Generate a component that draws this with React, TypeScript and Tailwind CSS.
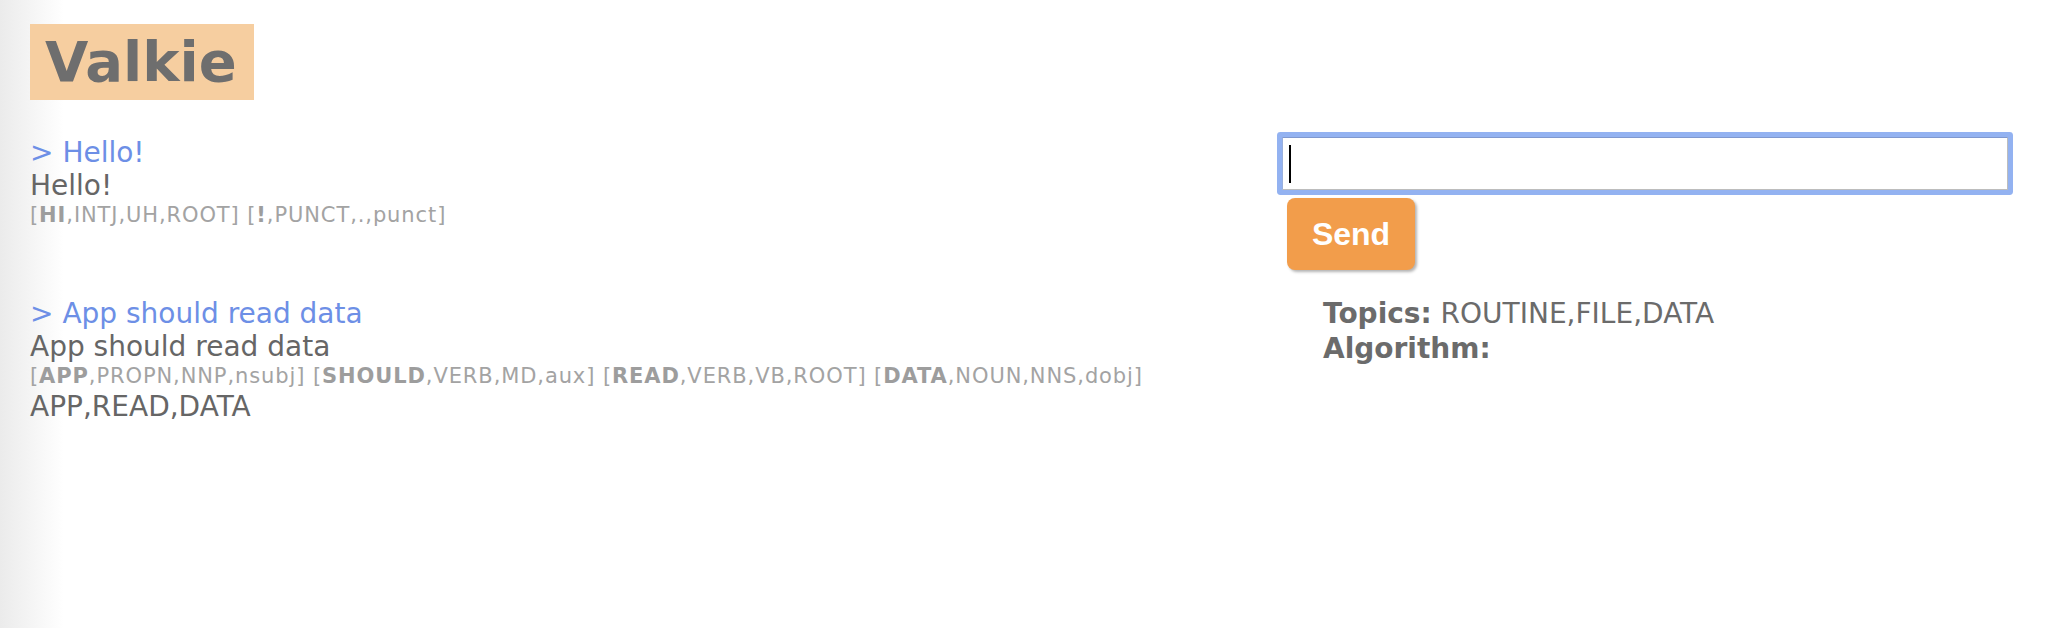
const messages = [
  {
    said: "Hello!",
    tags: [
      { word: "HI", rest: "INTJ,UH,ROOT" },
      { word: "!", rest: "PUNCT,.,punct" },
    ],
    keywords: "",
  },
  {
    said: "App should read data",
    tags: [
      { word: "APP", rest: "PROPN,NNP,nsubj" },
      { word: "SHOULD", rest: "VERB,MD,aux" },
      { word: "READ", rest: "VERB,VB,ROOT" },
      { word: "DATA", rest: "NOUN,NNS,dobj" },
    ],
    keywords: "APP,READ,DATA",
  },
];

function Message({ said, tags, keywords }: (typeof messages)[number]) {
  return (
    <div>
      <div className="text-[28px] leading-[33px] text-[#6d8fe6]">&gt; {said}</div>
      <div className="text-[28px] leading-[33px] text-[#666666]">{said}</div>
      <div className="text-[21px] leading-[27px] tracking-[0.9px] text-[#a3a3a3]">
        {tags.map((t, i) => (
          <span key={i}>
            {i > 0 && " "}[<b className="text-[#9d9d9d]">{t.word}</b>,{t.rest}]
          </span>
        ))}
      </div>
      <div className="min-h-[33px] text-[28px] leading-[33px] text-[#666666]">{keywords}</div>
    </div>
  );
}

export default function App() {
  return (
    <div className="min-h-[628px] bg-[linear-gradient(to_right,#ebebeb,#ffffff_64px)] font-['DejaVu_Sans',sans-serif]">
      <header className="pl-[30px] pt-[24px]">
        <h1 className="inline-block h-[76px] bg-[#f6cea0] pl-[15px] pr-[17px] text-[56px] font-bold leading-[76px] text-[#6e6e6e]">
          Valkie
        </h1>
      </header>

      <main className="mt-[36px] flex pl-[30px] pr-[46px]">
        <div className="flex flex-1 flex-col gap-[35px]">
          {messages.map((m, i) => (
            <Message key={i} {...m} />
          ))}
        </div>

        <div className="w-[726px]">
          <div className="mt-[1px] flex h-[53px] items-center rounded-[1px] border border-[#bdbdbd] border-t-[#7f98cf] border-l-[#9ab0dd] bg-white pl-[6px] shadow-[0_0_0_5px_#93b2f1]">
            <span className="h-[38px] w-[2px] bg-black" />
            <input className="h-full flex-1 bg-transparent outline-none" />
          </div>

          <button className="ml-[5px] mt-[8px] h-[72px] w-[128px] rounded-[8px] bg-[#f29d4b] font-['Liberation_Sans',sans-serif] text-[32px] font-bold text-white shadow-[2px_2px_3px_rgba(0,0,0,0.3)]">
            Send
          </button>

          <div className="mt-[26px] pl-[41px] text-[28px] leading-[35px] text-[#6b6b6b]">
            <div>
              <b>Topics:</b> ROUTINE,FILE,DATA
            </div>
            <div>
              <b>Algorithm:</b>
            </div>
          </div>
        </div>
      </main>
    </div>
  );
}
